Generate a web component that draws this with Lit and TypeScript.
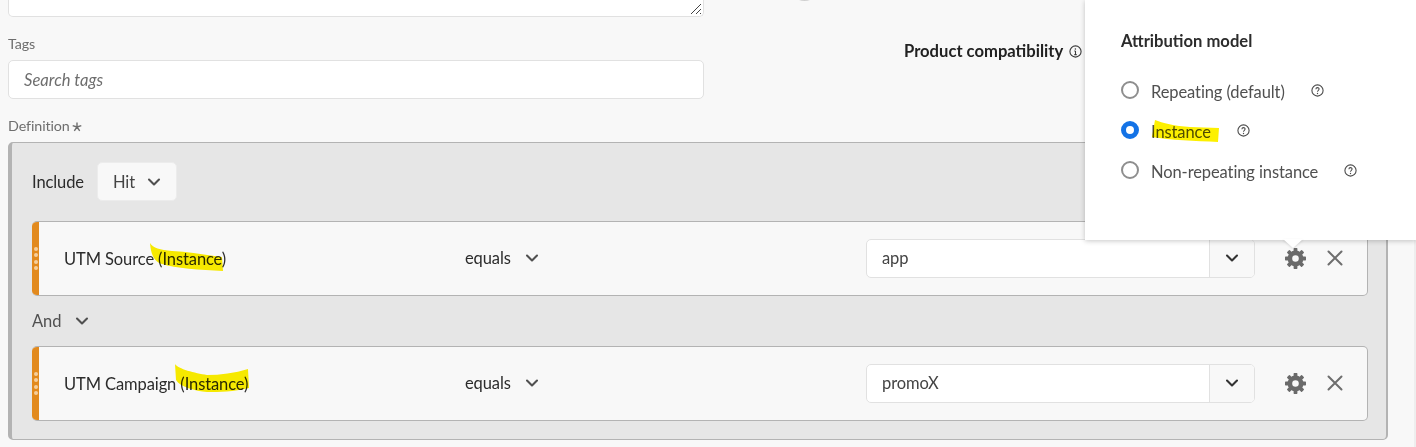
import { LitElement, html, css, svg } from "lit";
import { customElement } from "lit/decorators.js";

const chevron = (cls = "chev") => html`<svg class=${cls} width="14" height="10" viewBox="0 0 14 10"><path d="M2 2.5 7 7.5 12 2.5" fill="none" stroke="currentColor" stroke-width="2.1" stroke-linecap="round" stroke-linejoin="round"/></svg>`;

const teeth = [0, 45, 90, 135, 180, 225, 270, 315];
const gear = () => html`<svg class="gear" width="21" height="21" viewBox="0 0 21 21">
  ${teeth.map((a) => svg`<rect x="8.6" y="0" width="3.8" height="5" rx=".7" fill="#6a6a6a" transform="rotate(${a} 10.5 10.5)"/>`)}
  <circle cx="10.5" cy="10.5" r="5.6" fill="none" stroke="#6a6a6a" stroke-width="4.6"/>
</svg>`;

const cross = () => html`<svg width="16" height="16" viewBox="0 0 16 16"><path d="M1.5 1.5 14.5 14.5M14.5 1.5 1.5 14.5" stroke="#6e6e6e" stroke-width="2" stroke-linecap="round"/></svg>`;

const help = () => html`<svg class="help" width="13" height="13" viewBox="0 0 13 13"><circle cx="6.5" cy="6.5" r="5.6" fill="none" stroke="#4b4b4b" stroke-width="1.1"/><path d="M4.9 5.2c0-2.1 3.2-2.1 3.2-.1 0 1.2-1.6 1.2-1.6 2.6" fill="none" stroke="#4b4b4b" stroke-width="1.05"/><circle cx="6.5" cy="9.5" r=".7" fill="#4b4b4b"/></svg>`;

const info = () => html`<svg class="help" width="13" height="13" viewBox="0 0 13 13"><circle cx="6.5" cy="6.5" r="5.6" fill="none" stroke="#3a3a3a" stroke-width="1.1"/><path d="M6.5 6v3.6M5.3 9.6h2.4M5.3 6h1.2" fill="none" stroke="#3a3a3a" stroke-width="1.05"/><circle cx="6.4" cy="3.9" r=".75" fill="#3a3a3a"/></svg>`;

const star = () => html`<svg width="10" height="10" viewBox="0 0 10 10"><path d="M5 .5V5M5 5 9.3 3.6M5 5 7.7 8.8M5 5 2.3 8.8M5 5 .7 3.6" stroke="#6e6e6e" stroke-width="1.4" fill="none"/></svg>`;

@customElement("app-root")
export class AppRoot extends LitElement {
  static styles = css`
    :host { display: block; height: 447px; position: relative; overflow: hidden; background: #f8f8f8;
      font-family: Lato, "Noto Sans", sans-serif; font-size: 16.5px; letter-spacing: -0.1px; color: #2c2c2c; }
    .page { padding: 0 28px 0 8px; display: flex; flex-direction: column; }
    .edge { position: absolute; right: 0; top: 0; bottom: 0; width: 2px; background: #eeeeee; }
    .knob { position: absolute; left: 796px; top: -8px; width: 17px; height: 9px; border-radius: 50%; background: #cfcfcf; }
    .top { display: flex; height: 116px; }
    .left { width: 696px; flex: none; display: flex; flex-direction: column; }
    .textarea { height: 16px; box-sizing: content-box; background: #fff; border: 1px solid #e1e1e1; border-top: 0; border-radius: 0 0 5px 5px; position: relative; }
    .resize { position: absolute; right: 1px; bottom: 1px; }
    .label { font-size: 14.3px; line-height: 20px; color: #6e6e6e; }
    .tags-label { margin-top: 17px; margin-bottom: 6px; }
    input { box-sizing: border-box; width: 100%; height: 39px; padding: 0 15px; border: 1px solid #e1e1e1; border-radius: 5px; background: #fff; font: italic 16.6px Lato, sans-serif; outline: none; }
    input::placeholder { color: #6e6e6e; }
    .compat { margin: 41px 0 0 200px; display: flex; align-items: center; gap: 6px; font-weight: 700; font-size: 16.6px; letter-spacing: 0; line-height: 20px; color: #222; height: 20px; }
    .def-label { height: 26px; display: flex; align-items: flex-start; gap: 2px; }
    .def-label svg { margin-top: 6px; }
    .panel { box-sizing: border-box; height: 298px; background: #e6e6e6; border: 1px solid #b3b3b3; border-left-width: 4px; border-right-width: 2px; border-radius: 5px; padding: 19px 18px 0 20px; display: flex; flex-direction: column; }
    .include { display: flex; align-items: center; gap: 13px; height: 39px; }
    .hit { box-sizing: border-box; width: 80px; height: 39px; background: #f8f8f8; border-radius: 5px; border: 1px solid #ececec; display: flex; align-items: center; justify-content: space-between; padding: 0 15px; color: #444; }
    .chev { color: #505050; flex: none; }
    .card { box-sizing: border-box; height: 75px; background: #f8f8f8; border: 1px solid #b3b3b3; border-left: 0; border-radius: 5px; display: flex; align-items: center; overflow: hidden; }
    .card.first { margin-top: 20px; }
    .handle { width: 7px; align-self: stretch; flex: none; background: #e28a1e; display: flex; flex-direction: column; align-items: center; justify-content: center; gap: 2.3px; margin: -1px 0; }
    .handle i { width: 4px; height: 4px; border-radius: 50%; background: #f6cf9c; }
    .name { width: 401px; margin-left: 25px; flex: none; white-space: nowrap; padding-top: 1px; }
    .op { width: 401px; flex: none; display: flex; align-items: center; gap: 14px; padding-bottom: 1px; }
    .combo { box-sizing: border-box; width: 389px; height: 39px; flex: none; display: flex; background: #fff; border: 1px solid #e1e1e1; border-radius: 5px; overflow: hidden; margin-bottom: 1px; }
    .combo span { flex: 1; padding-left: 15px; line-height: 37px; color: #444; }
    .combo b { width: 44px; flex: none; background: #f8f8f8; border-left: 1px solid #e1e1e1; display: flex; align-items: center; justify-content: center; color: #333; }
    .combo .chev { color: #333; }
    .actions { display: flex; align-items: center; margin: 0 0 1px 30px; gap: 21px; }
    .and { height: 50px; display: flex; align-items: center; gap: 14px; color: #505050; }
    .pop { position: absolute; left: 1085px; top: 0; width: 331px; height: 240px; box-sizing: border-box; background: #fff; box-shadow: 0 1px 5px rgba(0,0,0,.22); padding: 31px 36px; }
    .tip { position: absolute; left: 1283px; top: 239px; width: 0; height: 0; border-left: 10px solid transparent; border-right: 10px solid transparent; border-top: 9px solid #fff; filter: drop-shadow(0 1px 1px rgba(0,0,0,.12)); }
    .pop h3 { margin: 0 0 20px; font-size: 16.6px; letter-spacing: 0; line-height: 20px; font-weight: 700; color: #2c2c2c; }
    .row { box-sizing: border-box; display: flex; align-items: center; height: 40px; padding-top: 2px; color: #505050; }
    .radio { box-sizing: border-box; width: 18px; height: 18px; border-radius: 50%; border: 2px solid #8e8e8e; margin: 0 12px 4px 0; flex: none; background: #fff; }
    .radio.on { border: 5.5px solid #1473e6; }
    .row .help { margin: 0 0 4px 26px; }
    .marks { position: absolute; inset: 0; pointer-events: none; mix-blend-mode: multiply; }
  `;

  private card(name: string, value: string, first = false) {
    return html`<div class="card ${first ? "first" : ""}">
      <div class="handle"><i></i><i></i><i></i><i></i></div>
      <div class="name">${name}</div>
      <div class="op">equals ${chevron()}</div>
      <div class="combo"><span>${value}</span><b>${chevron()}</b></div>
      <div class="actions">${gear()}${cross()}</div>
    </div>`;
  }

  render() {
    return html`
      <div class="page">
        <div class="top">
          <div class="left">
            <div class="textarea"><svg class="resize" width="12" height="12" viewBox="0 0 12 12"><path d="M11 1 1 11M11 6 6 11M11 10 10 11" stroke="#444" stroke-width="1"/></svg></div>
            <div class="label tags-label">Tags</div>
            <input placeholder="Search tags" />
          </div>
          <div class="compat">Product compatibility ${info()}</div>
        </div>
        <div class="label def-label">Definition ${star()}</div>
        <div class="panel">
          <div class="include">Include <div class="hit">Hit ${chevron()}</div></div>
          ${this.card("UTM Source (Instance)", "app", true)}
          <div class="and">And ${chevron()}</div>
          ${this.card("UTM Campaign (Instance)", "promoX")}
        </div>
      </div>
      <div class="knob"></div>
      <div class="edge"></div>
      <div class="pop">
        <h3>Attribution model</h3>
        <div class="row"><span class="radio"></span>Repeating (default)${help()}</div>
        <div class="row"><span class="radio on"></span>Instance${help()}</div>
        <div class="row"><span class="radio"></span>Non-repeating instance${help()}</div>
      </div>
      <div class="tip"></div>
      <svg class="marks" width="1416" height="447" viewBox="0 0 1416 447">
        <path fill="#fdf000" d="M150 243C153 248 160 250 172 251C190 252 205 255 222 257L223 271C200 270 175 268 162 264C155 262 151 256 150 243Z"/>
        <path fill="#fdf000" d="M175 364C178 369 195 373 207 375C220 375 235 373 248 369L249 388C233 392 220 392 207 392C195 391 180 387 176 380Z"/>
        <path fill="#fdf000" d="M1155 120C1162 123 1175 126 1190 127L1219 128L1218 142C1195 141 1170 140 1152 137Z"/>
      </svg>
    `;
  }
}
